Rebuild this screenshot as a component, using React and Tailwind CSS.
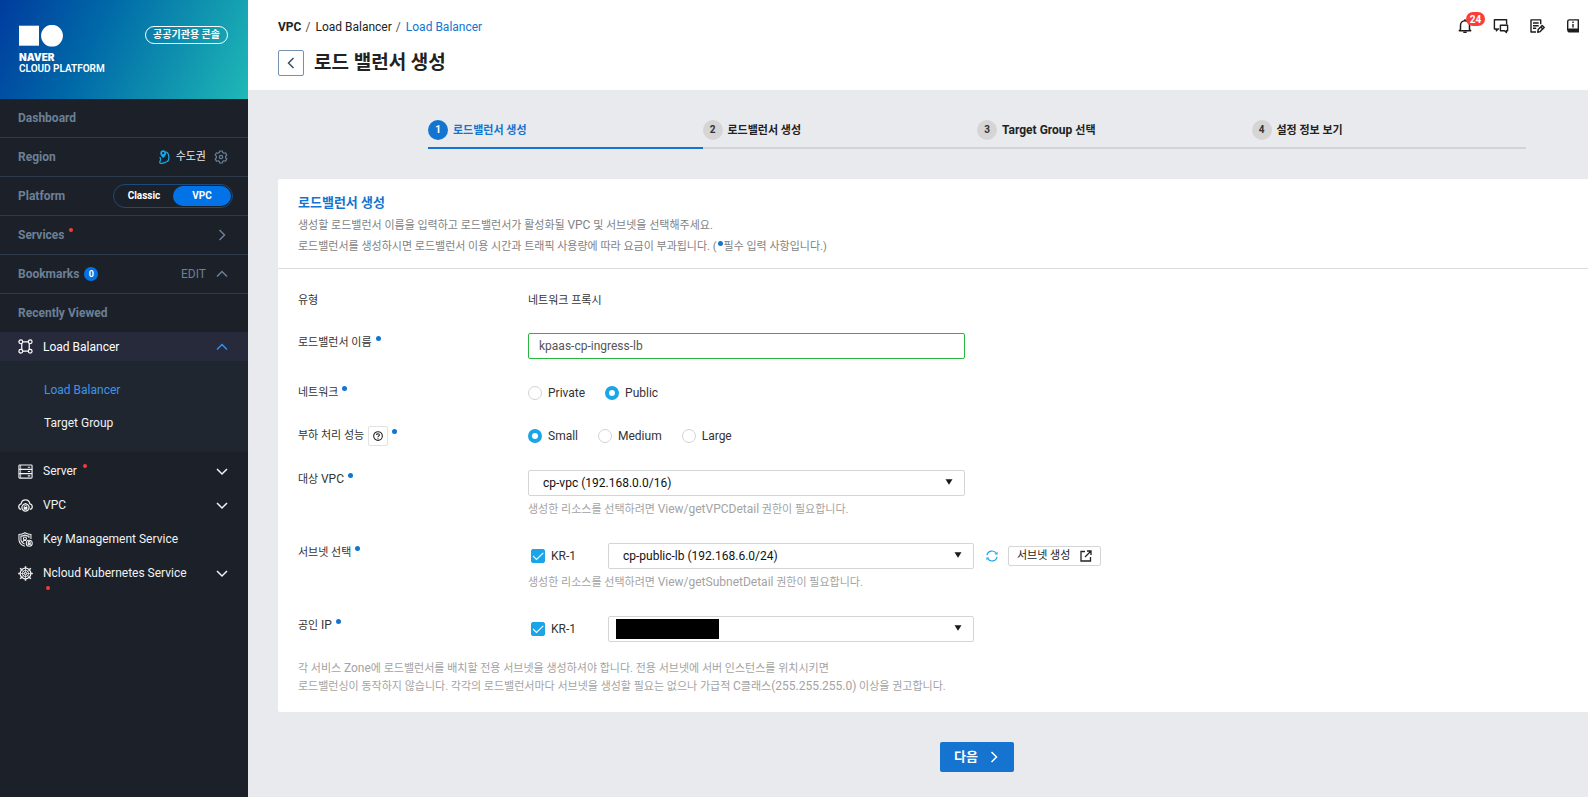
import React, { useState } from "react";

const FONT = "font-[Roboto,'Noto_Sans_CJK_KR',sans-serif]";

function Chevron({ dir = "down", className = "" }) {
  const paths = {
    down: "M1 4l5 5 5-5",
    up: "M1 8.5l5-5 5 5",
    right: "M3.5 1l5 5-5 5",
    left: "M8.5 1l-5 5 5 5",
  };
  return (
    <svg viewBox="0 0 12 12" className={`size-3 shrink-0 ${className}`} fill="none" stroke="currentColor" strokeWidth="1.5" aria-hidden="true">
      <path d={paths[dir]} />
    </svg>
  );
}

function LoadBalancerIcon() {
  return (
    <svg viewBox="0 0 16 16" className="size-[15px] shrink-0" fill="none" stroke="currentColor" strokeWidth="1.3" aria-hidden="true">
      <circle cx="3" cy="3" r="2" />
      <circle cx="13" cy="3" r="2" />
      <circle cx="3" cy="13" r="2" />
      <circle cx="13" cy="13" r="2" />
      <path d="M5 3h6M5 13h6M4 4.8v6.4M12 4.8v6.4" />
    </svg>
  );
}

function ServerIcon() {
  return (
    <svg viewBox="0 0 16 16" className="size-[15px] shrink-0" fill="none" stroke="currentColor" strokeWidth="1.2" aria-hidden="true">
      <rect x="1" y="1" width="14" height="14" rx="0.8" />
      <path d="M1 5.700h14M1 10.300h14M10.500 3.400h2.500M10.500 8h2.500M10.500 12.700h2.500" />
      <path d="M2.800 1.200v13.600" strokeWidth="0.800" />
    </svg>
  );
}

function VpcIcon() {
  return (
    <svg viewBox="0 0 16 16" className="size-[15px] shrink-0" fill="none" stroke="currentColor" strokeWidth="1.300" aria-hidden="true">
      <path d="M3.400 12.200A3 3 0 0 1 .8 9.200c0-1.600 1-2.700 2.500-3C3.800 3.800 5.600 2 8 2s4.200 1.800 4.700 4.200c1.500.3 2.500 1.400 2.500 3a3 3 0 0 1-2.600 3" />
      <path d="M5.400 13A4.200 4.200 0 0 1 8 5.900 4.200 4.200 0 0 1 10.600 13c-.8.700-1.600 1-2.600 1s-1.800-.3-2.600-1z" />
      <path d="M6.700 9.700v-.6a1.300 1.300 0 0 1 2.600 0v.6" strokeWidth="1" />
      <rect x="6" y="9.500" width="4" height="3" fill="currentColor" stroke="none" />
    </svg>
  );
}

function KeyIcon() {
  return (
    <svg viewBox="0 0 16 16" className="size-[15px] shrink-0" fill="none" stroke="currentColor" strokeWidth="1.100" aria-hidden="true">
      <path d="M13.800 7.500V2.600c-2.300 0-4.400-.6-6.300-1.800C5.700 2 3.500 2.600 1 2.600v5c0 3.700 2.500 6.300 6.300 7.700" />
      <path d="M11.700 6.500V4.400c-1.600 0-3-.4-4.200-1.200-1.200.8-2.700 1.200-4.400 1.200v3.200c0 2.500 1.700 4.200 4 5.300" />
      <circle cx="7.400" cy="6.900" r="1.600" />
      <path d="M4.900 11c.3-1.400 1.200-2.200 2.500-2.200l1.400.4" />
      <circle cx="12" cy="12" r="3.200" />
      <path d="M11 12v-.8a1 1 0 0 1 2 0v.8" />
      <rect x="10.400" y="11.800" width="3.200" height="2" fill="currentColor" stroke="none" />
    </svg>
  );
}

function HelmIcon() {
  return (
    <svg viewBox="0 0 16 16" className="size-[15px] shrink-0" fill="none" stroke="currentColor" aria-hidden="true">
      <circle cx="8" cy="8" r="5.700" strokeWidth="1.300" />
      <circle cx="8" cy="8" r="3.400" strokeWidth="0.900" />
      <circle cx="8" cy="8" r="1" strokeWidth="0.900" />
      <path d="M8 3v4M8 9v4M3 8h4M9 8h4M4.500 4.500l2.800 2.800M8.700 8.700l2.800 2.800M11.500 4.500L8.700 7.300M7.300 8.700l-2.800 2.800" strokeWidth="0.800" />
      <path d="M8 .2v2M8 13.800v2M.2 8h2M13.800 8h2M2.300 2.300l1.500 1.500M12.200 12.200l1.500 1.500M13.700 2.300l-1.500 1.500M3.800 12.200l-1.500 1.500" strokeWidth="1.600" />
    </svg>
  );
}

function KoreaMapIcon() {
  return (
    <svg viewBox="0 0 12 14" className="h-[14px] w-3 shrink-0 text-[#18a8e8]" fill="none" stroke="currentColor" strokeWidth="1.200" aria-hidden="true">
      <path d="M8.300 1.800c1.600 1 2.600 3 2.600 5.600 0 2-.5 3.700-2.200 4.400-1.600.5-3 1.200-5 1.600-1.500.2-2.200-.3-1.800-1.600.3-1.200 1-2 .6-3.400L1.700 7" />
      <path d="M5.200 8C3.200 6 2.300 4.700 2.300 3.200a2.900 2.900 0 0 1 5.800 0C8.100 4.700 7.200 6 5.200 8z" fill="#18a8e8" stroke="none" />
      <circle cx="5.200" cy="3.200" r="1.100" fill="#1c212a" stroke="none" />
    </svg>
  );
}

function GearIcon() {
  return (
    <svg viewBox="0 0 14 14" className="size-[14px] shrink-0" fill="none" stroke="currentColor" strokeWidth="1.200" strokeLinejoin="round" aria-hidden="true">
      <path d="M5.700 1h2.600l.4 1.600 1.200.7 1.600-.5 1.300 2.300-1.200 1.100v1.600l1.200 1.100-1.300 2.300-1.600-.5-1.200.7L8.300 13H5.700l-.4-1.600-1.200-.7-1.600.5L1.200 8.900l1.200-1.100V6.200L1.200 5.100l1.300-2.300 1.600.5 1.200-.7z" />
      <circle cx="7" cy="7" r="1.700" />
    </svg>
  );
}

function RedDot({ className = "" }) {
  return <span className={`size-1 rounded-full bg-[#fb3a35] ${className}`} />;
}

function SideSection({ children, last = false }) {
  return (
    <div className={`flex items-center pr-5 pl-[18px] text-xs font-bold text-[#6b8097] ${last ? "h-[38px]" : "h-[39px] border-b border-[#2d3a4c]"}`}>
      {children}
    </div>
  );
}

function ServiceLink({ icon, label, dot, expandable, newBelow }) {
  return (
    <a href="#" className="relative flex h-[34px] items-center pr-5 pl-[18px] text-xs text-[#f0f2f4]">
      {icon}
      <span className="ml-[10px]">{label}</span>
      {dot && <RedDot className="mb-2.5 ml-1.5" />}
      {newBelow && <RedDot className="absolute bottom-0 left-[46px]" />}
      {expandable && <Chevron className="ml-auto" />}
    </a>
  );
}

function Sidebar() {
  return (
    <nav className="w-[248px] shrink-0 bg-[#1c2028]">
      <div className="flex h-[99px] items-start justify-between bg-linear-[115deg,#003c9e_0%,#0069a8_38%,#1298b0_75%,#1fb9b7_100%] pl-[19px] pr-5 pt-[25px] text-white">
        <a href="#" className="block">
          <svg viewBox="0 0 45 22" className="h-[22px] w-[45px]" fill="currentColor" aria-hidden="true">
            <path d="M0 .7h20v20H0z" />
            <circle cx="33" cy="10.700" r="10.900" />
          </svg>
          <span className="mt-[5px] block font-[Inter,sans-serif] text-[10px] leading-[11px] font-black">NAVER</span>
          <span className="block text-[10px] leading-[11px] font-semibold">CLOUD PLATFORM</span>
        </a>
        <span className="mt-px flex h-[18px] items-center rounded-full border border-white px-[7px] text-[10px] leading-4 font-bold">
          공공기관용 콘솔
        </span>
      </div>

      <SideSection><a href="#">Dashboard</a></SideSection>
      <SideSection>
        <span className="mr-auto">Region</span>
        <KoreaMapIcon />
        <span className="ml-1.5 mr-2 text-[11px] font-normal text-[#e6e9ec]">수도권</span>
        <button type="button" aria-label="Region settings"><GearIcon /></button>
      </SideSection>
      <SideSection>
        <span className="mr-auto">Platform</span>
        <div className="-mr-[5px] flex h-6 w-[120px] items-center rounded-full border border-[#1d4a78] p-px text-[10px] text-white">
          <button type="button" className="h-5 flex-1 font-bold">Classic</button>
          <button type="button" className="h-5 w-[58px] rounded-full bg-[#0273e6] font-bold">VPC</button>
        </div>
      </SideSection>
      <SideSection>
        <span>Services</span>
        <RedDot className="mb-2.5 ml-1" />
        <Chevron dir="right" className="ml-auto" />
      </SideSection>
      <SideSection>
        <span>Bookmarks</span>
        <span className="ml-[5px] flex size-[14px] items-center justify-center rounded-full bg-[#0273e6] text-[9px] text-white">0</span>
        <button type="button" className="ml-auto mr-[10px] font-normal">EDIT</button>
        <Chevron dir="up" />
      </SideSection>
      <SideSection last>Recently Viewed</SideSection>

      <a href="#" className="flex h-[29px] items-center bg-[#262a3b] pr-5 pl-[18px] text-xs text-white">
        <LoadBalancerIcon />
        <span className="ml-[10px]">Load Balancer</span>
        <Chevron dir="up" className="ml-auto text-[#3593ee]" />
      </a>
      <div className="flex flex-col bg-[#20262f] py-3 pb-[13px] pl-11 text-xs">
        <a href="#" className="flex h-[33px] items-center text-[#3f94e4]">Load Balancer</a>
        <a href="#" className="flex h-[33px] items-center text-[#f0f2f4]">Target Group</a>
      </div>
      <div className="pt-0.5">
        <ServiceLink icon={<ServerIcon />} label="Server" dot expandable />
        <ServiceLink icon={<VpcIcon />} label="VPC" expandable />
        <ServiceLink icon={<KeyIcon />} label="Key Management Service" />
        <ServiceLink icon={<HelmIcon />} label="Ncloud Kubernetes Service" expandable newBelow />
      </div>
    </nav>
  );
}

function TopIcons() {
  return (
    <div className="flex items-center gap-5 pr-[7px] text-[#1d1d1d]">
      <button type="button" aria-label="Notifications" className="relative">
        <svg viewBox="0 0 16 16" className="size-4" fill="none" stroke="currentColor" strokeWidth="1.500" aria-hidden="true">
          <path d="M3.500 11.500V7.200C3.500 4.700 5.500 2.700 8 2.700s4.500 2 4.500 4.500v4.300l1.200 1.300H2.300z" strokeLinejoin="round" />
          <path d="M6.300 14.300h3.400M8 1.200v1.500" />
        </svg>
        <span className="absolute -top-[6px] left-[9px] flex h-[14px] w-[19px] items-center justify-center rounded-full bg-[#fa3d38] text-[10px] font-bold text-white">24</span>
      </button>
      <button type="button" aria-label="Messages">
        <svg viewBox="0 0 16 16" className="size-4" fill="none" stroke="currentColor" strokeWidth="1.400" strokeLinejoin="round" aria-hidden="true">
          <path d="M6 11H4.800L3.400 12.700V11H1.400V1.800h12.200v4.600" />
          <path d="M7.400 7.200h7.200v5.600h-1.200v1.700l-1.800-1.700H7.400z" />
        </svg>
      </button>
      <button type="button" aria-label="Notes">
        <svg viewBox="0 0 16 16" className="size-4" fill="none" stroke="currentColor" strokeWidth="1.400" aria-hidden="true">
          <path d="M7 14H2V1.900h9.700v4.300" strokeLinejoin="round" />
          <path d="M4 5h5.700M4 7.700h5.700M4 10.300h3.200" />
          <path d="M8.700 14.200l.5-2.600 4-4 2 2-4 4z" strokeLinejoin="round" />
          <path d="M11.800 9l2 2" />
        </svg>
      </button>
      <button type="button" aria-label="Guide">
        <svg viewBox="0 0 16 16" className="size-4" fill="none" stroke="currentColor" strokeWidth="1.400" aria-hidden="true">
          <path d="M2.700 12.500V3.600c0-1 .7-1.700 1.700-1.700h8.900v9.300H4.200c-1 0-1.500.6-1.500 1.300z" />
          <path d="M2.500 12.500c0-.6.6-1 1.300-1h10.200v3H3.800c-.7 0-1.300-.6-1.300-1.200z" fill="currentColor" stroke="none" />
          <path d="M8 3.600v1.400M8 6v3.400" />
        </svg>
      </button>
    </div>
  );
}

function PageHeader() {
  return (
    <header className="flex h-[90px] items-start justify-between bg-white pl-[30px] pt-[18px] text-[#222]">
      <div>
        <div className="flex h-[18px] items-center text-xs">
          <a href="#" className="font-bold">VPC</a>
          <span className="mx-1 w-[6px] text-[#555]">/</span>
          <a href="#">Load Balancer</a>
          <span className="mx-1 w-[6px] text-[#555]">/</span>
          <a href="#" className="text-[#1474d0]">Load Balancer</a>
        </div>
        <div className="mt-3.5 flex items-center gap-[10px]">
          <button type="button" aria-label="Back" className="flex size-[26px] items-center justify-center rounded-[2px] border border-[#7690b0] text-[#3c4f66]">
            <Chevron dir="left" />
          </button>
          <h1 className="text-[19px] leading-6 font-bold">로드 밸런서 생성</h1>
        </div>
      </div>
      <TopIcons />
    </header>
  );
}

const STEPS = [
  { label: "로드밸런서 생성" },
  { label: "로드밸런서 생성" },
  { latin: "Target Group ", label: "선택" },
  { label: "설정 정보 보기" },
];

function Steps() {
  return (
    <ol className="mx-[150px] flex pt-[30px]">
      {STEPS.map((s, i) => (
        <li
          key={i}
          className={`flex h-[29px] flex-1 items-start gap-[5px] border-b-2 text-[11px] leading-[22px] font-bold ${i === 0 ? "border-[#1474d0] text-[#1474d0]" : "border-[#d3d4d6] text-[#222]"}`}
        >
          <span className={`flex size-5 items-center justify-center rounded-full text-[10px] ${i === 0 ? "bg-[#1474d0] text-white" : "bg-[#d5d5d5] text-[#333]"}`}>{i + 1}</span>
          <span>
            {s.latin && <span className="text-xs leading-4">{s.latin}</span>}
            {s.label}
          </span>
        </li>
      ))}
    </ol>
  );
}

function Dot() {
  return <span className="mb-2.5 ml-1 inline-block size-[5px] shrink-0 rounded-full bg-[#1474d0]" />;
}

function Row({ label, htmlFor, required = true, extra, className = "", children }) {
  const Tag = htmlFor ? "label" : "span";
  return (
    <div className={`flex ${className}`}>
      <div className="flex h-6 w-[230px] shrink-0 items-center text-[11px] text-[#333]">
        <Tag htmlFor={htmlFor}>{label}</Tag>
        {extra}
        {required && <Dot />}
      </div>
      <div>{children}</div>
    </div>
  );
}

function Radio({ name, value, checked, onChange }) {
  return (
    <label className="flex items-center gap-1.5 text-xs text-[#333]">
      <input
        type="radio"
        name={name}
        checked={checked}
        onChange={onChange}
        className="size-[14px] appearance-none rounded-full border border-[#d3d3d3] bg-white checked:border-4 checked:border-[#1aa5e8]"
      />
      {value}
    </label>
  );
}

function RadioGroup({ name, options, initial, label }) {
  const [value, setValue] = useState(initial);
  return (
    <div role="radiogroup" aria-label={label} className="flex h-6 items-center gap-5">
      {options.map((o) => (
        <Radio key={o} name={name} value={o} checked={value === o} onChange={() => setValue(o)} />
      ))}
    </div>
  );
}

function Select({ id, label, option, className, children }) {
  return (
    <div className={`relative ${className}`}>
      <select id={id} aria-label={label} className="block h-[26px] w-full appearance-none rounded-[2px] border border-[#d5d5d5] bg-white pl-[14px] pr-6 text-xs text-[#111]">
        <option>{option}</option>
      </select>
      {children}
      <svg viewBox="0 0 8 6" className="pointer-events-none absolute top-[9px] right-3 h-1.5 w-2" fill="#1a1a1a" aria-hidden="true">
        <path d="M.5.3h7L4 5.800z" />
      </svg>
    </div>
  );
}

function Zone({ id }) {
  const [on, setOn] = useState(true);
  return (
    <label htmlFor={id} className="flex w-20 items-center gap-1.5 pl-[3px] text-xs text-[#333]">
      <span className="relative size-[14px]">
        <input id={id} type="checkbox" checked={on} onChange={() => setOn(!on)} className="block size-[14px] appearance-none rounded-[2px] border border-[#d3d3d3] checked:border-[#1aa5e8] checked:bg-[#1aa5e8]" />
        {on && (
          <svg viewBox="0 0 14 14" className="pointer-events-none absolute inset-0 size-[14px]" fill="none" stroke="#fff" strokeWidth="1.100" aria-hidden="true">
            <path d="M2 7l3.500 3.500L12.300 3.800" />
          </svg>
        )}
      </span>
      KR-1
    </label>
  );
}

function Help({ target }) {
  return (
    <p className="mt-[5px] text-[11px] leading-[18px] text-[#a3a3a3]">
      생성한 리소스를 선택하려면 <span className="text-xs leading-4">{target}</span> 권한이 필요합니다.
    </p>
  );
}

function FormCard() {
  const [name, setName] = useState("kpaas-cp-ingress-lb");
  return (
    <section className="mt-[30px] rounded-[2px] bg-white">
      <div className="h-[90px] border-b border-[#dcdcdc] px-5 pt-[13px]">
        <h2 className="text-[13px] leading-[22px] font-bold text-[#1474d0]">로드밸런서 생성</h2>
        <p className="mt-px text-[11px] leading-[21px] text-[#828282]">
          생성할 로드밸런서 이름을 입력하고 로드밸런서가 활성화될 <span className="text-xs leading-4">VPC</span> 및 서브넷을 선택해주세요.
          <br />
          로드밸런서를 생성하시면 로드밸런서 이용 시간과 트래픽 사용량에 따라 요금이 부과됩니다. (<span className="mx-px mb-1 inline-block size-[5px] rounded-full bg-[#1474d0]" />필수 입력 사항입니다.)
        </p>
      </div>

      <form className="px-5 pt-5 pb-4" onSubmit={(e) => e.preventDefault()}>
        <Row label="유형" required={false}>
          <p className="text-[11px] leading-6 text-[#333]">네트워크 프록시</p>
        </Row>
        <Row label="로드밸런서 이름" htmlFor="lb-name" className="mt-[18px]">
          <input
            id="lb-name"
            value={name}
            onChange={(e) => setName(e.target.value)}
            className="mt-0.5 block h-[26px] w-[437px] rounded-[2px] border border-[#27b73c] px-[10px] text-xs text-[#555] outline-none"
          />
        </Row>
        <Row label="네트워크" className="mt-[22px]">
          <RadioGroup name="network" label="네트워크" options={["Private", "Public"]} initial="Public" />
        </Row>
        <Row
          label="부하 처리 성능"
          className="mt-[19px]"
          extra={
            <button type="button" aria-label="도움말" className="ml-1 flex size-5 items-center justify-center rounded-[2px] border border-[#e2e2e2] text-[#222]">
              <svg viewBox="0 0 12 12" className="size-[10px]" fill="none" stroke="currentColor" strokeWidth="1.300" aria-hidden="true">
                <circle cx="6" cy="6" r="5.200" />
                <path d="M4.300 4.800c0-1 .7-1.600 1.700-1.600s1.700.6 1.700 1.500c0 1.100-1.700 1.300-1.700 2.500M6 8v1.200" />
              </svg>
            </button>
          }
        >
          <RadioGroup name="capacity" label="부하 처리 성능" options={["Small", "Medium", "Large"]} initial="Small" />
        </Row>
        <Row label={<>대상 <span className="text-xs">VPC</span></>} htmlFor="vpc" className="mt-5">
          <Select id="vpc" option="cp-vpc (192.168.0.0/16)" className="mt-[2px] w-[437px]" />
          <Help target="View/getVPCDetail" />
        </Row>
        <Row label="서브넷 선택" className="mt-[22px]">
          <div className="mt-[2px] flex items-center">
            <Zone id="subnet-kr1" />
            <Select label="서브넷 선택" option="cp-public-lb (192.168.6.0/24)" className="w-[366px]" />
            <button type="button" aria-label="새로고침" className="ml-3 text-[#1aa5e8]">
              <svg viewBox="0 0 12 12" className="size-3" fill="none" stroke="currentColor" strokeWidth="1.200" aria-hidden="true">
                <path d="M1 5.200A5 5 0 0 1 10.300 3.600M11 6.800A5 5 0 0 1 1.700 8.400" />
                <path d="M11.600 1.800v2.800H8.800zM.4 10.200V7.400h2.800z" fill="currentColor" stroke="none" />
              </svg>
            </button>
            <button type="button" className="ml-2.5 flex h-5 items-center gap-2.5 rounded-[2px] border border-[#d5d5d5] px-2 text-[11px] text-[#222]">
              서브넷 생성
              <svg viewBox="0 0 12 12" className="size-3" fill="none" stroke="currentColor" strokeWidth="1.300" aria-hidden="true">
                <path d="M5 1.500H1v9.500h9.500V7M7 1h4v4M11 1L5 7" />
              </svg>
            </button>
          </div>
          <Help target="View/getSubnetDetail" />
        </Row>
        <Row label={<>공인 <span className="text-xs">IP</span></>} className="mt-[22px]">
          <div className="mt-[2px] flex items-center">
            <Zone id="ip-kr1" />
            <Select label="공인 IP" option="" className="w-[366px]">
              <span className="pointer-events-none absolute top-[3px] left-2 h-5 w-[103px] bg-black" />
            </Select>
          </div>
        </Row>
        <p className="mt-[18px] text-[11px] leading-[18px] text-[#a3a3a3]">
          각 서비스 <span className="text-xs leading-4">Zone</span>에 로드밸런서를 배치할 전용 서브넷을 생성하셔야 합니다. 전용 서브넷에 서버 인스턴스를 위치시키면
          <br />
          로드밸런싱이 동작하지 않습니다. 각각의 로드밸런서마다 서브넷을 생성할 필요는 없으나 가급적 <span className="text-xs leading-4">C</span>클래스<span className="text-xs leading-4">(255.255.255.0)</span> 이상을 권고합니다.
        </p>
      </form>
    </section>
  );
}

export default function App() {
  return (
    <div className={`flex min-h-screen overflow-hidden bg-[#e9eaee] ${FONT}`}>
      <Sidebar />
      <div className="min-w-0 flex-1">
        <PageHeader />
        <main className="overflow-hidden">
          <div className="min-w-[1458px] px-[30px] pb-6">
            <Steps />
            <FormCard />
            <div className="mt-[30px] flex justify-center">
              <button type="button" className="flex h-[30px] w-[74px] items-center justify-center gap-2.5 rounded-[2px] bg-[#1474d0] text-[13px] font-bold text-white">
                다음
                <Chevron dir="right" />
              </button>
            </div>
          </div>
        </main>
      </div>
    </div>
  );
}
